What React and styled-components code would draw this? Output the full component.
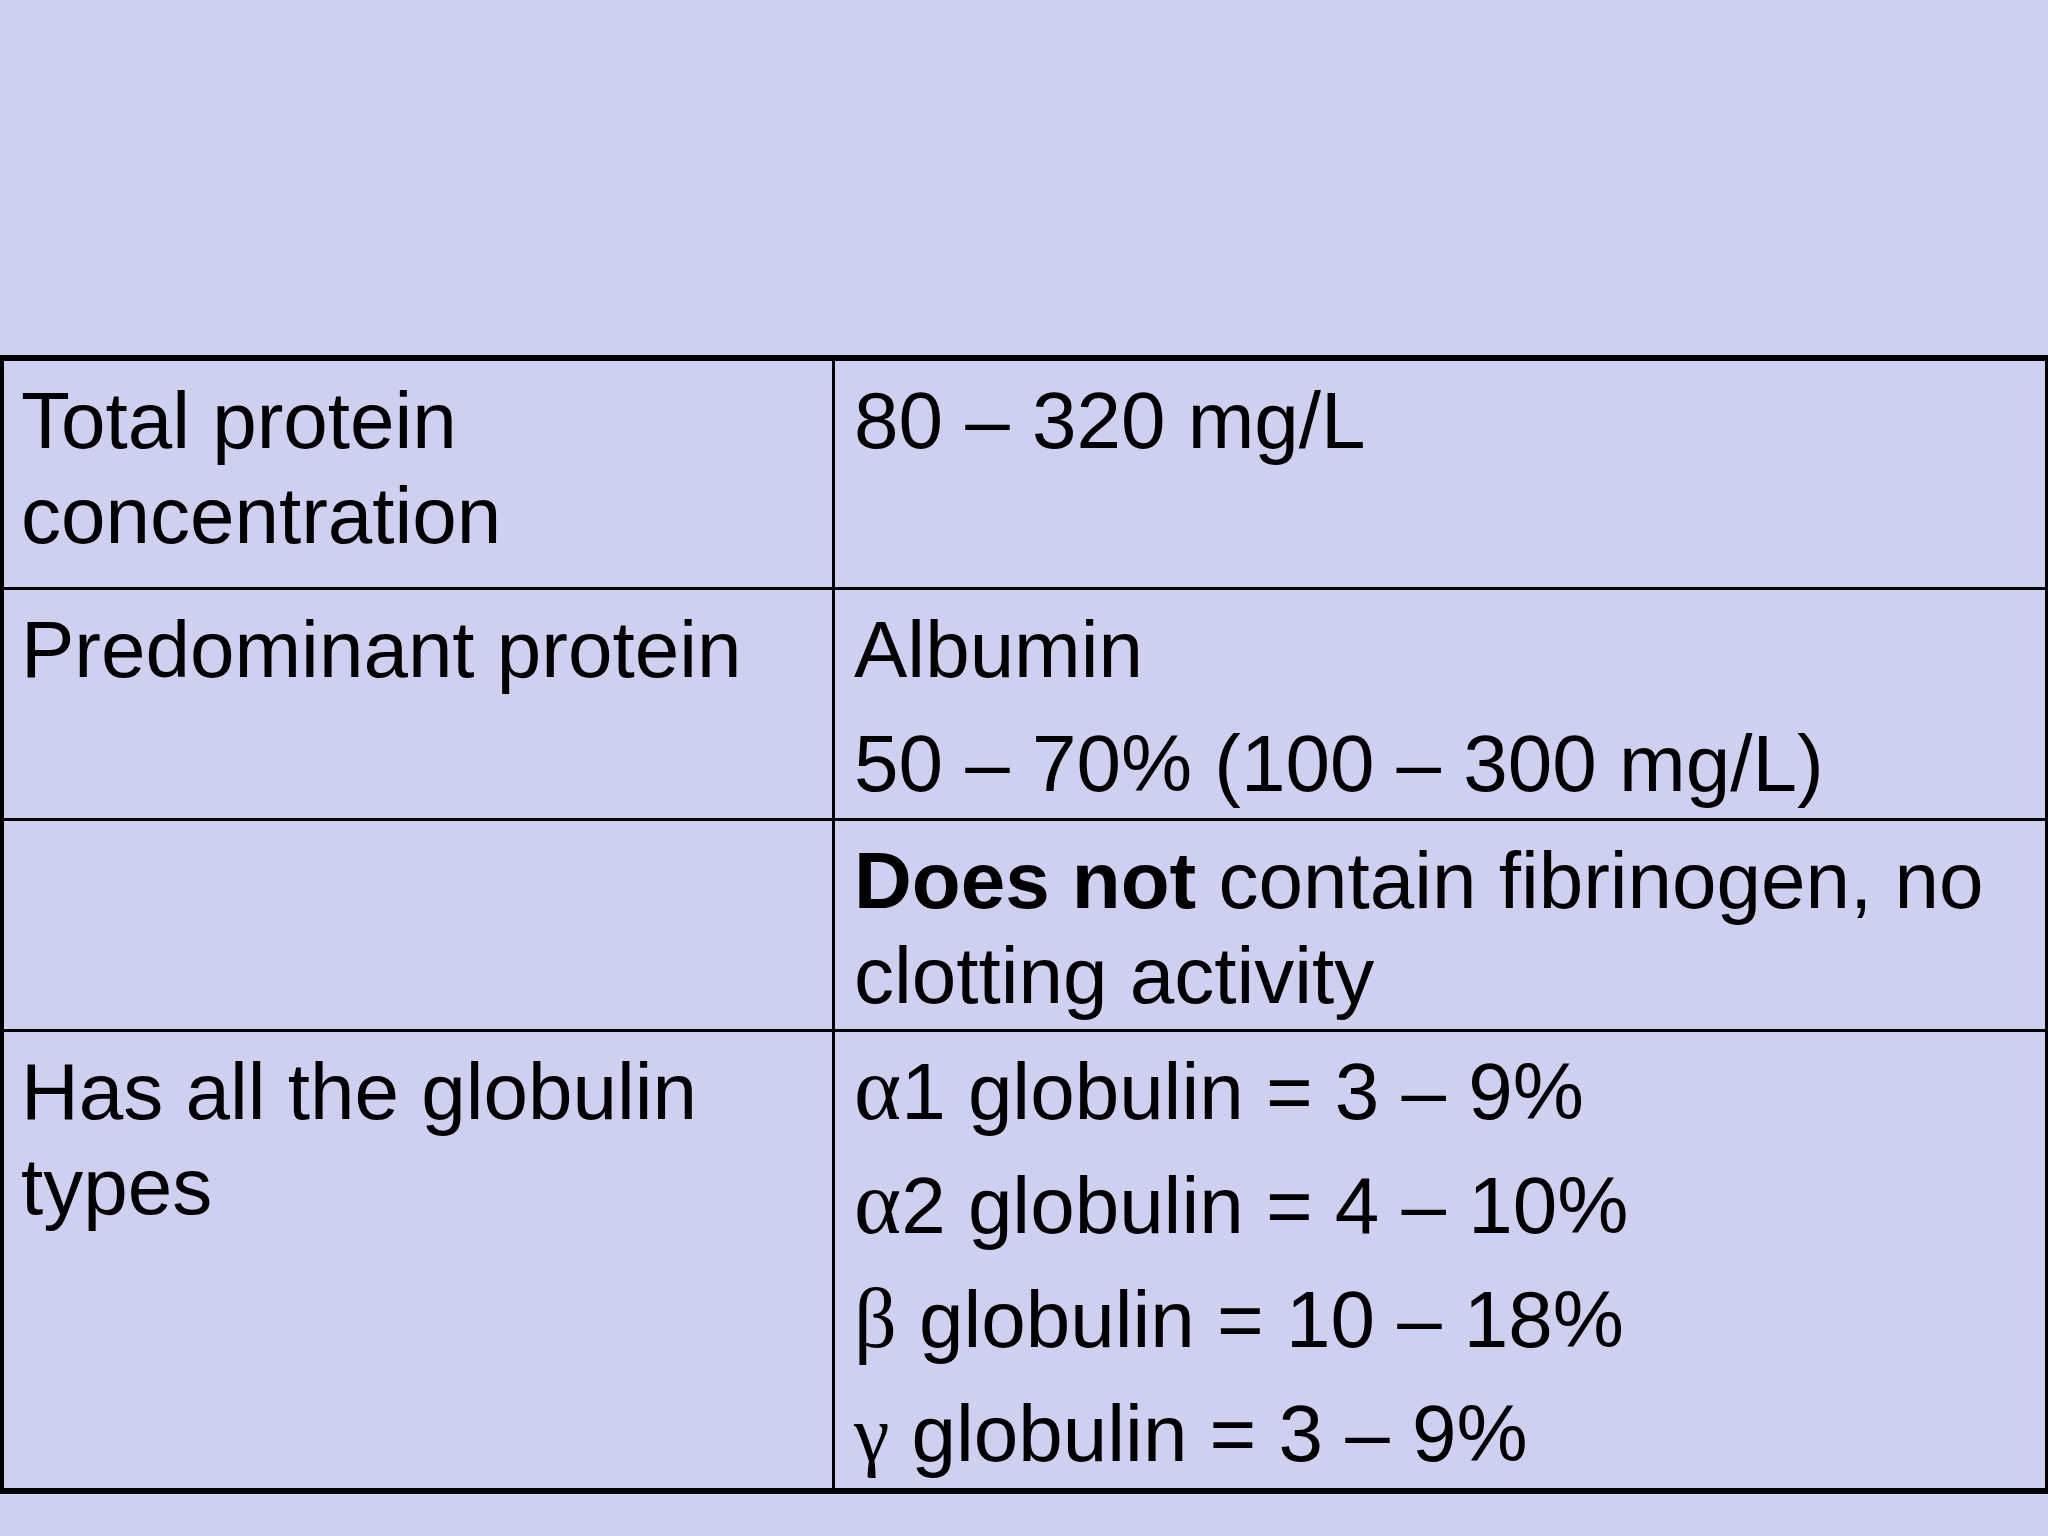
import React from 'react'
import styled, { createGlobalStyle } from 'styled-components'

const GlobalStyle = createGlobalStyle`
  html, body {
    margin: 0;
    padding: 0;
  }
  body {
    background: #cfcfef;
    font-family: "Liberation Sans", Arial, sans-serif;
    color: #000;
  }
`

const Slide = styled.div`
  width: 2048px;
  height: 1536px;
  box-sizing: border-box;
  padding-top: 355px;
  background: #cfcfef;
  overflow: hidden;
`

const Table = styled.div`
  display: flex;
  flex-direction: column;
  border-top: 6px solid #000;
  border-bottom: 6px solid #000;
  border-left: 4px solid #000;
  border-right: 3px solid #000;
`

const Row = styled.div`
  display: grid;
  grid-template-columns: 831px 1fr;
  height: ${(p) => p.$h}px;
  box-sizing: border-box;
  border-top: ${(p) => (p.$first ? 'none' : '3px solid #000')};
`

const Cell = styled.div`
  box-sizing: border-box;
  padding: 12px ${(p) => (p.$left ? '17px' : '19px')} 0;
  border-right: ${(p) => (p.$left ? '3px solid #000' : 'none')};
  font-size: 80px;
  line-height: 95px;
`

const Para = styled.p`
  margin: 0;
  & + & {
    margin-top: 19px;
  }
`

/* greek letters come from the Symbol font in the slide */
const Greek = styled.span`
  font-family: "Liberation Serif", "Times New Roman", serif;
  font-size: ${(p) => p.$size || 80}px;
  line-height: 1;
`

const rows = [
  {
    h: 226,
    left: ['Total protein concentration'],
    right: ['80 – 320 mg/L'],
  },
  {
    h: 231,
    left: ['Predominant protein'],
    right: ['Albumin', '50 – 70% (100 – 300 mg/L)'],
  },
  {
    h: 211,
    left: [],
    right: [
      <>
        <b>Does not</b> contain fibrinogen, no clotting activity
      </>,
    ],
  },
  {
    h: 459,
    left: ['Has all the globulin types'],
    right: [
      <>
        <Greek $size={90}>α</Greek>1 globulin = 3 – 9%
      </>,
      <>
        <Greek $size={90}>α</Greek>2 globulin = 4 – 10%
      </>,
      <>
        <Greek $size={84}>β</Greek> globulin = 10 – 18%
      </>,
      <>
        <Greek $size={80}>γ</Greek> globulin = 3 – 9%
      </>,
    ],
  },
]

export default function App() {
  return (
    <>
      <GlobalStyle />
      <Slide>
        <Table>
          {rows.map((r, i) => (
            <Row key={i} $h={r.h} $first={i === 0}>
              <Cell $left>
                {r.left.map((t, j) => (
                  <Para key={j}>{t}</Para>
                ))}
              </Cell>
              <Cell>
                {r.right.map((t, j) => (
                  <Para key={j}>{t}</Para>
                ))}
              </Cell>
            </Row>
          ))}
        </Table>
      </Slide>
    </>
  )
}
